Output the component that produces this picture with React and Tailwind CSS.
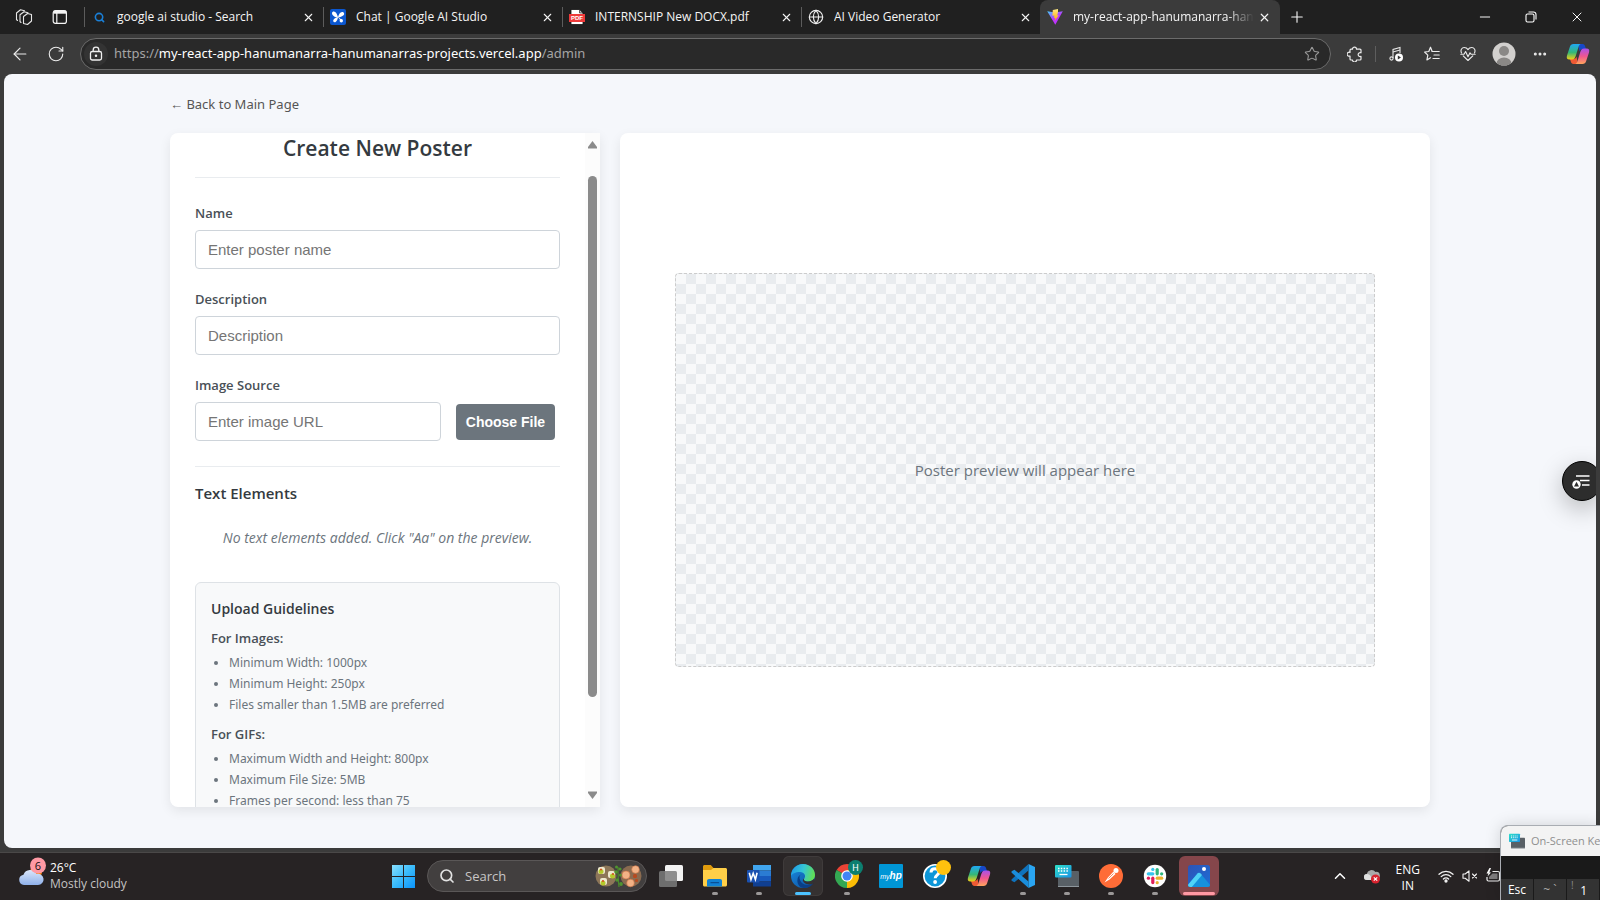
import React from "react";
import {
  ArrowLeft,
  RotateCw,
  Star,
  X,
  Plus,
  Minus,
  Search,
  ChevronUp,
  Globe,
  Ellipsis,
} from "lucide-react";

/* ---------- browser icons ---------- */

function WorkspacesIcon() {
  return (
    <svg className="h-[18px] w-[18px]" viewBox="0 0 18 18" fill="none" stroke="#e8e8e8" strokeWidth="1.1" strokeLinejoin="round" strokeLinecap="round">
      <path d="M8.500 8.500 12.500 5.500 16.500 6.500v6.500l-4 3.500L8.500 15.500z" />
      <path d="M6 14.500 5 13.500V6.800L9 3.800l4 1" />
      <path d="M2.500 12.500 1.500 11.500v-6.500L5.500 1.800 9.500 2.800" />
    </svg>
  );
}

function TabActionsIcon() {
  return (
    <svg className="h-4 w-4" viewBox="0 0 16 16" fill="none" stroke="#f5f5f5" strokeWidth="1.2">
      <rect x="1.200" y="1.700" width="13.200" height="12.700" rx="2.200" />
      <path d="M1.500 3.200h12.600" strokeWidth="3" />
      <path d="M4.800 4v10" />
    </svg>
  );
}

function StudioIcon() {
  return (
    <svg className="h-4 w-4" viewBox="0 0 16 16">
      <rect width="16" height="16" rx="2" fill="#0b57d0" />
      <g fill="#fff">
        <path d="M8 8.500C6 8.500 2 7 2 4.200 2 2.500 4 2 5.200 3 6.800 4.200 7.500 6.500 8 8.500z" />
        <path d="M8 8.500C8.500 6 10 3 12.200 3c1.800 0 2.600 2 1.300 3.300C12.200 7.600 10 8.300 8 8.500z" />
        <path d="M8 8c-2 .6-4.500 1.500-4.800 3.500-.2 1.700 1.600 2.200 2.700 1.200C7.200 11.500 7.800 9.800 8 8z" />
        <circle cx="11.300" cy="11.700" r="1.700" />
        <path d="M7.500 7.500l4.500 3.500-1 1z" />
      </g>
    </svg>
  );
}

function PdfIcon() {
  return (
    <svg className="h-4 w-4" viewBox="0 0 16 16">
      <path d="M2 .5h8.500L14 4v11.500H2z" fill="#fff" stroke="#111" strokeWidth=".8" />
      <path d="M10.500.5V4H14z" fill="#bbb" stroke="#111" strokeWidth=".6" />
      <rect x="0" y="5" width="16" height="8" fill="#ee3a3a" />
      <text x="8" y="11.200" textAnchor="middle" fontSize="6" fontWeight="700" fill="#fff" fontFamily="Liberation Sans, sans-serif">PDF</text>
    </svg>
  );
}

function ViteIcon() {
  return (
    <svg className="h-4 w-4" viewBox="0 0 16 16">
      <defs>
        <linearGradient id="viteBody" x1="0" y1="0" x2=".7" y2="1">
          <stop offset="0" stopColor="#41d1ff" />
          <stop offset=".6" stopColor="#bd34fe" />
        </linearGradient>
        <linearGradient id="viteBolt" x1="0" y1="0" x2="0" y2="1">
          <stop offset="0" stopColor="#ffea83" />
          <stop offset="1" stopColor="#ffa800" />
        </linearGradient>
      </defs>
      <path d="M.2 2.200 8 3.500l7.800-1.300L8.300 15.800z" fill="url(#viteBody)" />
      <path d="M11 0 5.800 1 5.400 6.800l2-.4-.5 2.700 1.500-.4L7.500 12l4.300-5.800-1.700.3.900-3.200z" fill="url(#viteBolt)" />
    </svg>
  );
}

function LockIcon() {
  return (
    <svg className="h-4 w-4" viewBox="0 0 16 16" fill="none" stroke="#f0f0f0" strokeWidth="1.300">
      <rect x="2.500" y="5.500" width="11" height="8.500" rx="1.800" />
      <path d="M5.200 5.500V4a2.800 2.800 0 0 1 5.600 0v1.500" />
      <circle cx="8" cy="9.800" r=".6" fill="#f0f0f0" />
    </svg>
  );
}

function ExtensionsIcon() {
  return (
    <svg className="h-4 w-4" viewBox="0 0 16 16" fill="none" stroke="#ececec" strokeWidth="1.200" strokeLinejoin="round">
      <path d="M5.500 3.200a2 2 0 0 1 4 0H13a1 1 0 0 1 1 1v2.600a2 2 0 1 0 0 3.600V13a1 1 0 0 1-1 1H9.500a2 2 0 0 1-4 0H4a1 1 0 0 1-1-1V10a2 2 0 1 1 0-3.600V4.200a1 1 0 0 1 1-1z" />
    </svg>
  );
}

function MusicIcon() {
  return (
    <svg className="h-4 w-4" viewBox="0 0 16 16" fill="none" stroke="#e8e8e8" strokeWidth="1.100">
      <path d="M5 12V3.500l7-2V7" />
      <path d="M5 6l7-2" />
      <circle cx="3.500" cy="12.500" r="1.600" />
      <circle cx="11" cy="11.500" r="4" fill="#fff" stroke="none" />
      <path d="M9.800 9.500v4l3.200-2z" fill="#333" stroke="none" />
    </svg>
  );
}

function FavoritesIcon() {
  return (
    <svg className="h-4 w-4" viewBox="0 0 16 16" fill="none" stroke="#ececec" strokeWidth="1.200" strokeLinejoin="round" strokeLinecap="round">
      <path d="M9.500 5.500H8.200L6.500 1.200 4.800 5.500.6 6l3.200 3.200-.9 4.800 3.600-2.200" />
      <path d="M8.200 5.500h7M10 9h5.200M9 12.500h6.200" />
    </svg>
  );
}

function EssentialsIcon() {
  return (
    <svg className="h-4 w-4" viewBox="0 0 16 16" fill="none" stroke="#ececec" strokeWidth="1.100" strokeLinejoin="round" strokeLinecap="round">
      <path d="M1.500 7C0 3.500 2.200 1.500 4.200 1.500 6 1.500 7.300 2.500 8 3.600 8.700 2.500 10 1.500 11.800 1.500c2 0 4.200 2 2.700 5.500" />
      <path d="M3.200 9.800 8 14.500l4.800-4.700" />
      <path d="M.8 8.300H4L5.600 5.500 8 10.800l2-4 1.200 1.500h4" />
    </svg>
  );
}

function AvatarIcon() {
  return (
    <svg className="h-6 w-6" viewBox="0 0 24 24">
      <defs>
        <clipPath id="avatarClip"><circle cx="12" cy="12" r="11.500" /></clipPath>
      </defs>
      <circle cx="12" cy="12" r="11.500" fill="#d2d0ce" />
      <g clipPath="url(#avatarClip)" fill="#8a8886">
        <circle cx="12" cy="9" r="5" />
        <ellipse cx="12" cy="21.500" rx="7.500" ry="6" />
      </g>
    </svg>
  );
}

function CopilotIcon({ id }) {
  return (
    <svg className="h-6 w-6" viewBox="0 0 24 24">
      <defs>
        <linearGradient id={id + "a"} x1="0" y1="0" x2="0" y2="1">
          <stop offset="0" stopColor="#1fa8f5" />
          <stop offset=".55" stopColor="#35b877" />
          <stop offset="1" stopColor="#f4d016" />
        </linearGradient>
        <linearGradient id={id + "b"} x1="0" y1="0" x2="0" y2="1">
          <stop offset="0" stopColor="#a951ea" />
          <stop offset=".5" stopColor="#f0568f" />
          <stop offset="1" stopColor="#ffa45c" />
        </linearGradient>
      </defs>
      <path d="M12 2h4.500c1.600 0 2.300 1 2.700 2.500L20 7h-3.500c-1.800 0-2.500 1-3 2.500z" fill="#1748c8" />
      <path d="M12 22H7.500c-1.600 0-2.300-1-2.700-2.500L4 17h3.500c1.800 0 2.500-1 3-2.500z" fill="#ee5a34" />
      <path d="M7.500 2h7.200c-1.300.6-1.800 1.700-2.200 3L9.700 14C8.800 16.500 8 17.500 6 17.500H3.500C1 17.500.3 16 1 13.500l3-9C4.500 3 5.500 2 7.500 2z" fill={"url(#" + id + "a)"} />
      <path d="M16.500 22H9.300c1.300-.6 1.800-1.700 2.200-3l2.800-9C15.200 7.500 16 6.500 18 6.500h2.500C23 6.500 23.700 8 23 10.500l-3 9c-.5 1.500-1.500 2.500-3.500 2.500z" fill={"url(#" + id + "b)"} />
    </svg>
  );
}

function RestoreIcon() {
  return (
    <svg className="h-3 w-3" viewBox="0 0 12 12" fill="none" stroke="#fff" strokeWidth="1.100">
      <rect x="1" y="3" width="8" height="8" rx="1.500" />
      <path d="M3.500 1h5A2.500 2.500 0 0 1 11 3.500v5" />
    </svg>
  );
}

function ReadingIcon() {
  return (
    <svg className="h-5 w-5" viewBox="0 0 20 20">
      <path d="M4 5h13.500M8 9.500h9.500M10 14h7.500" stroke="#fff" strokeWidth="1.600" />
      <circle cx="4.500" cy="13.500" r="4.200" fill="#fff" />
      <path d="M4.500 10.700 7 15.500H2z" fill="#2d2d2d" />
    </svg>
  );
}

/* ---------- taskbar icons ---------- */

function WeatherIcon() {
  return (
    <svg className="h-8 w-8" viewBox="0 0 32 32">
      <defs>
        <linearGradient id="cloud" x1="0" y1="0" x2="0" y2="1">
          <stop offset="0" stopColor="#dbe7fb" />
          <stop offset="1" stopColor="#8fb1ea" />
        </linearGradient>
      </defs>
      <circle cx="18" cy="15" r="6" fill="#f7820c" />
      <path d="M6 28a5.200 5.200 0 0 1-.5-10.300A7 7 0 0 1 18.500 17 5.600 5.600 0 1 1 20 28z" fill="url(#cloud)" />
      <circle cx="20" cy="8.500" r="8" fill="#ff99a4" />
      <text x="20" y="12.500" textAnchor="middle" fontSize="11" fill="#111" fontFamily="Open Sans, sans-serif">6</text>
    </svg>
  );
}

function WindowsIcon() {
  return (
    <svg className="h-6 w-6" viewBox="0 0 24 24">
      <defs>
        <linearGradient id="winLogo" x1="0" y1="0" x2="24" y2="24" gradientUnits="userSpaceOnUse">
          <stop offset="0" stopColor="#8fe3ff" />
          <stop offset=".5" stopColor="#3cbcfb" />
          <stop offset="1" stopColor="#0a93fb" />
        </linearGradient>
      </defs>
      <path d="M1 1h11v11H1zM13 1h11v11H13zM1 13h11v11H1zM13 13h11v11H13z" fill="url(#winLogo)" />
    </svg>
  );
}

function FoodIcon() {
  return (
    <svg className="h-6 w-12" viewBox="0 0 48 24">
      <circle cx="12" cy="12" r="10.500" fill="#8d7658" />
      <circle cx="37" cy="12" r="10.500" fill="#8a6b50" />
      <g fill="#efe9cf">
        <rect x="4" y="3" width="7" height="7" rx="2" />
        <rect x="14" y="7" width="7" height="7" rx="2" />
        <rect x="6" y="14" width="7" height="7" rx="2" />
      </g>
      <g fill="#b5c92c">
        <circle cx="7" cy="7.500" r="2.500" />
        <circle cx="18.500" cy="12" r="2.500" />
        <circle cx="9" cy="19" r="2.500" />
      </g>
      <g fill="#d83b1c">
        <circle cx="7" cy="5.500" r=".9" /><circle cx="19" cy="10" r=".9" /><circle cx="9" cy="17" r=".9" />
      </g>
      <path d="M25 23c-1-7-1-14-1-20" stroke="#4b8b2c" strokeWidth="1.200" fill="none" />
      <g fill="#4f9430">
        <circle cx="22.500" cy="3" r="1.500" /><circle cx="26" cy="5" r="1.600" /><circle cx="22" cy="8" r="1.700" />
        <circle cx="26.500" cy="11" r="1.500" /><circle cx="23" cy="16" r="1.700" /><circle cx="27" cy="20" r="1.900" />
      </g>
      <g fill="#f2b286" stroke="#cf7448" strokeWidth=".6">
        <circle cx="32" cy="11" r="4" /><circle cx="41.500" cy="5.500" r="3.800" /><circle cx="36.500" cy="19" r="3.800" />
      </g>
      <g fill="#b64a20">
        <rect x="39" y="10" width="4" height="4" rx="1.500" /><rect x="41" y="15" width="3" height="3" rx="1" />
      </g>
    </svg>
  );
}

function TaskViewIcon() {
  return (
    <svg className="h-6 w-6" viewBox="0 0 24 24">
      <rect x="6" y="1" width="18" height="16" rx="1.500" fill="#f3f3f3" />
      <rect x="0" y="7" width="18" height="16" rx="1.500" fill="#7b7b7b" fillOpacity=".85" />
    </svg>
  );
}

function ExplorerIcon() {
  return (
    <svg className="h-6 w-6" viewBox="0 0 24 24">
      <path d="M0 2.500C0 1.700.7 1 1.500 1h6.300l2.700 3H22v6H0z" fill="#e09b0d" />
      <path d="M0 6h8l2.500-2H22.500c.8 0 1.500.7 1.500 1.500V21c0 .8-.7 1.500-1.500 1.500h-21C.7 22.500 0 21.800 0 21z" fill="#ffcf48" />
      <path d="M4 22.500V17c0-1.200.8-2 2-2h11c1.200 0 2 .8 2 2v5.500z" fill="#1182d4" />
      <path d="M8 18.700h7.500" stroke="#0a4f94" strokeWidth="1.300" strokeLinecap="round" />
    </svg>
  );
}

function WordIcon() {
  return (
    <svg className="h-6 w-6" viewBox="0 0 24 24">
      <rect x="6" y="1" width="18" height="5.500" fill="#41a5ee" />
      <rect x="6" y="6.500" width="18" height="5.500" fill="#2b7cd3" />
      <rect x="6" y="12" width="18" height="5.500" fill="#185abd" />
      <rect x="6" y="17.500" width="18" height="5" fill="#103f91" />
      <rect x="0" y="6" width="12.500" height="12.500" rx="1" fill="#1a50b0" />
      <path d="M2.300 8.800 4 15.500 6.200 9.300 8.400 15.500 10.100 8.800" fill="none" stroke="#fff" strokeWidth="1.600" />
    </svg>
  );
}

function EdgeIcon() {
  return (
    <svg className="h-6 w-6" viewBox="0 0 24 24">
      <defs>
        <linearGradient id="edgeTop" x1="0" y1=".3" x2="1" y2=".5">
          <stop offset="0" stopColor="#1f9be8" />
          <stop offset=".5" stopColor="#35c5d4" />
          <stop offset="1" stopColor="#63e04f" />
        </linearGradient>
        <linearGradient id="edgeSide" x1="0" y1="0" x2="1" y2="1">
          <stop offset="0" stopColor="#1a8ae0" />
          <stop offset="1" stopColor="#0c4f9c" />
        </linearGradient>
      </defs>
      <circle cx="12" cy="12" r="12" fill="url(#edgeSide)" />
      <path d="M0 12C0 5 5.500 0 12 0c7 0 12 5 12 11 0 4-3 6.500-7 6.500-3 0-5-1-4-2.500 2.500-3 .5-7-4-7C4 8 1 10 0 12z" fill="url(#edgeTop)" />
      <path d="M8.500 13c0 5 4 8 8 8 2.500 0 4.500-1 5.800-2-1 2-4 5-9 5C8 24 5.800 19 6.500 15.500 7 12 9 11 11 10c-1.500.8-2.500 1.500-2.500 3z" fill="#0a3f87" />
      <path d="M13.200 14.500c-1 1.800 1 3 3.800 3 2.500 0 4.500-1 5.800-2.500L24 16l-2 3.500c-2 1.200-6 1.500-9-1-1.500-1.500-1.500-3.500.2-4z" fill="#353131" />
    </svg>
  );
}

function ChromeIcon() {
  return (
    <svg className="h-7 w-7" viewBox="0 0 28 28">
      <path d="M12 16 1.600 10A12 12 0 0 1 22.400 10z" fill="#ea4335" />
      <path d="M12 16 1.600 10A12 12 0 0 0 12 28l6-8.600z" fill="#34a853" />
      <path d="M12 16 12 28A12 12 0 0 0 22.400 10H12z" fill="#fbbc05" />
      <circle cx="12" cy="16" r="5.800" fill="#fff" />
      <circle cx="12" cy="16" r="4.500" fill="#4285f4" />
      <circle cx="20.500" cy="7.500" r="7.500" fill="#0c7f70" />
      <text x="20.500" y="11" textAnchor="middle" fontSize="9" fill="#fff" fontFamily="Roboto, sans-serif">H</text>
    </svg>
  );
}

function MyHpIcon() {
  return (
    <svg className="h-6 w-6" viewBox="0 0 24 24">
      <rect width="24" height="24" rx="1" fill="#0096d6" />
      <text x="12" y="15" textAnchor="middle" fontSize="7" fontStyle="italic" fill="#fff" fontFamily="Liberation Sans, sans-serif">
        my<tspan fontSize="10" fontWeight="700">hp</tspan>
      </text>
    </svg>
  );
}

function HelpIcon() {
  return (
    <svg className="h-7 w-7" viewBox="0 0 28 28">
      <circle cx="12" cy="16" r="11.200" fill="#0d96d8" stroke="#fff" strokeWidth="1.600" />
      <path d="M8 12.500C8 10 9.800 8.700 12 8.700s4 1.300 4 3.500c0 2.500-3.800 2.800-3.800 6" fill="none" stroke="#fff" strokeWidth="3" />
      <circle cx="12.100" cy="22" r="1.900" fill="#fff" />
      <circle cx="20.500" cy="7.500" r="7.500" fill="#ffc20e" />
    </svg>
  );
}

function CodeIcon() {
  return (
    <svg className="h-6 w-6" viewBox="0 0 24 24">
      <path d="M17.500 0 24 3v18l-6.500 3z" fill="#2aa5f2" />
      <path d="M17.500 0v6.500L3.500 18.200 1 17c-.8-.6-.8-1.400 0-2z" fill="#0f73bd" />
      <path d="M17.500 24v-6.500L3.500 5.800 1 7c-.8.600-.8 1.400 0 2z" fill="#1a8ddb" />
    </svg>
  );
}

function KeyboardAppIcon({ id, className }) {
  return (
    <svg className={className} viewBox="0 0 24 24">
      <defs>
        <linearGradient id={id} x1="0" y1="0" x2="1" y2="1">
          <stop offset="0" stopColor="#2de0c8" />
          <stop offset="1" stopColor="#1a92e6" />
        </linearGradient>
      </defs>
      <rect x="3" y="7" width="21" height="16" rx="1" fill="#596066" />
      <path d="M3 22.500h21" stroke="#8e969c" />
      <rect x="0" y="1" width="16.500" height="12.500" rx="1" fill={"url(#" + id + ")"} />
      <path d="M3 4.500h11M3 7h11" stroke="#fff" strokeWidth="1.300" strokeDasharray="1.500 1.300" />
      <path d="M4.500 10.500h8" stroke="#fff" strokeWidth="1.300" />
    </svg>
  );
}

function PostmanIcon() {
  return (
    <svg className="h-6 w-6" viewBox="0 0 24 24">
      <circle cx="12" cy="12" r="12" fill="#ff6c37" />
      <circle cx="17" cy="6.500" r="2.500" fill="#fff" />
      <path d="M14.500 7.500 16.500 10 10.500 15.500 5.500 18.500 9 13.500z" fill="#fff" />
      <path d="M14.500 9.500 9.500 14.500" stroke="#ff6c37" strokeWidth=".8" />
    </svg>
  );
}

function SlackIcon() {
  return (
    <svg className="h-6 w-6" viewBox="0 0 24 24">
      <circle cx="12" cy="12" r="11.200" fill="#fff" />
      <g strokeWidth="3.200" strokeLinecap="round">
        <path d="M9.800 5.400v.1" stroke="#36c5f0" /><path d="M5.300 9.800h4.500" stroke="#36c5f0" />
        <path d="M14.200 5.500v4.300" stroke="#2eb67d" /><path d="M18.600 9.800h.1" stroke="#2eb67d" />
        <path d="M14.200 14.200h4.500" stroke="#ecb22e" /><path d="M14.200 18.600v.1" stroke="#ecb22e" />
        <path d="M9.800 14.200v4.400" stroke="#e01e5a" /><path d="M5.400 14.200h.1" stroke="#e01e5a" />
      </g>
    </svg>
  );
}

function PhotosIcon() {
  return (
    <svg className="h-6 w-6" viewBox="0 0 24 24">
      <defs>
        <linearGradient id="photoBg" x1="0" y1="0" x2="1" y2="1">
          <stop offset="0" stopColor="#2f52b4" />
          <stop offset="1" stopColor="#1c6fd8" />
        </linearGradient>
        <clipPath id="photoClip"><rect x="1" y="1" width="22" height="22" rx="2.500" /></clipPath>
      </defs>
      <g clipPath="url(#photoClip)">
        <rect width="24" height="24" fill="url(#photoBg)" />
        <path d="M0 22 10.500 9.500c1-1 2-1 3 0L24 22v3H0z" fill="#1690dc" />
        <path d="M0 22 10.500 9.500c1-1 2-1 3 0L15 11 4 24H0z" fill="#4fd3f7" />
      </g>
      <circle cx="17" cy="5" r="2" fill="#fff" />
    </svg>
  );
}

function CloudErrorIcon() {
  return (
    <svg className="h-4 w-4" viewBox="0 0 16 16">
      <path d="M3 12a3 3 0 0 1-.3-6A5 5 0 0 1 11.500 4 3.500 3.500 0 0 1 13 11z" fill="#a9a9a9" />
      <path d="M3 12a3 3 0 0 1 0-6c2 0 3 1 4 2.500V12z" fill="#e0e0e0" />
      <circle cx="11.500" cy="11" r="4.500" fill="#d8232f" />
      <path d="m9.800 9.300 3.400 3.400m0-3.400-3.400 3.400" stroke="#fff" strokeWidth="1.200" />
    </svg>
  );
}

function WifiIcon() {
  return (
    <svg className="h-4 w-4" viewBox="0 0 16 16" fill="none" stroke="#f2f2f2" strokeWidth="1.300" strokeLinecap="round">
      <path d="M1 6.200a10 10 0 0 1 14 0M3.200 8.600a6.800 6.800 0 0 1 9.600 0M5.400 11a3.700 3.700 0 0 1 5.200 0" />
      <circle cx="8" cy="13" r="1" fill="#f2f2f2" />
    </svg>
  );
}

function MutedIcon() {
  return (
    <svg className="h-4 w-4" viewBox="0 0 16 16" fill="none" stroke="#f2f2f2" strokeWidth="1.100" strokeLinecap="round" strokeLinejoin="round">
      <path d="M1 6h2.200L7 2.800v10.400L3.200 10.200H1z" />
      <path d="m10.500 6 4 4m0-4-4 4" />
    </svg>
  );
}

function BatteryIcon() {
  return (
    <svg className="h-4 w-4" viewBox="0 0 16 16" fill="none" stroke="#f2f2f2" strokeWidth="1.200">
      <path d="M6.500 3.500H12A1.500 1.500 0 0 1 13.500 5v6.500A1.500 1.500 0 0 1 12 13H2.500A1.500 1.500 0 0 1 1 11.500V9" />
      <path d="M6.500 5.500h5V11H3V9z" fill="#d8d8d8" fillOpacity=".5" stroke="none" />
      <path d="M3.500 0 .5 5.500h2l-1 3L5 4.500H3.300L5 0z" fill="#fff" stroke="none" />
    </svg>
  );
}

/* ---------- browser chrome ---------- */

const tabs = [
  { title: "google ai studio - Search", icon: <Search className="h-[11px] w-[11px] text-[#1a7fd6]" strokeWidth={3.500} /> },
  { title: "Chat | Google AI Studio", icon: <StudioIcon /> },
  { title: "INTERNSHIP New DOCX.pdf", icon: <PdfIcon /> },
  { title: "AI Video Generator", icon: <Globe className="h-4 w-4 text-[#f0f0f0]" strokeWidth={1.700} /> },
];

function TabBar() {
  return (
    <header className="flex h-[34px] shrink-0 items-stretch bg-[#202020] text-xs text-[#f5f5f5]">
      <div className="flex items-center gap-[19px] pr-4 pl-[15px]">
        <button type="button" aria-label="Workspaces"><WorkspacesIcon /></button>
        <button type="button" aria-label="Tab actions"><TabActionsIcon /></button>
      </div>
      {tabs.map((tab) => (
        <div key={tab.title} className="flex w-[239px] items-center">
          <span className="h-5 w-px bg-[#5c5c5c]" />
          <span className="ml-1.5 flex w-4 shrink-0 items-center justify-center">{tab.icon}</span>
          <span className="ml-2.5 flex-1 truncate">{tab.title}</span>
          <button type="button" aria-label="Close tab" className="mr-2"><X className="h-[13px] w-[13px]" strokeWidth={2} /></button>
        </div>
      ))}
      <div className="flex w-[240px] items-center rounded-t-lg bg-[#3b3b3b]">
        <span className="ml-[7px] shrink-0"><ViteIcon /></span>
        <span className="ml-2.5 flex-1 overflow-hidden whitespace-nowrap [mask-image:linear-gradient(to_right,#000_85%,transparent)]">
          my-react-app-hanumanarra-hanu
        </span>
        <button type="button" aria-label="Close tab" className="mr-[9px] ml-1"><X className="h-[13px] w-[13px]" strokeWidth={2.200} /></button>
      </div>
      <button type="button" aria-label="New tab" className="ml-2"><Plus className="h-[18px] w-[18px]" strokeWidth={1.500} /></button>
      <div className="ml-auto flex items-center">
        <button type="button" aria-label="Minimize" className="flex w-[46px] justify-center"><Minus className="h-4 w-4" strokeWidth={1.500} /></button>
        <button type="button" aria-label="Restore" className="flex w-[46px] justify-center"><RestoreIcon /></button>
        <button type="button" aria-label="Close" className="flex w-[46px] justify-center"><X className="h-4 w-4" strokeWidth={1.500} /></button>
      </div>
    </header>
  );
}

function Toolbar() {
  return (
    <nav className="flex h-10 shrink-0 items-center bg-[#3b3b3b] pr-2.5 pl-2.5 text-[#ececec]">
      <button type="button" aria-label="Back"><ArrowLeft className="h-5 w-5" strokeWidth={1.400} /></button>
      <button type="button" aria-label="Refresh" className="ml-[17px]"><RotateCw className="h-[18px] w-[18px]" strokeWidth={1.500} /></button>
      <div className="ml-[15px] flex h-8 flex-1 items-center rounded-full border border-[#6b6b6b] bg-[#292929] pr-2.5 pl-[3px]">
        <span className="flex h-6 w-6 items-center justify-center rounded-full bg-[#333]"><LockIcon /></span>
        <a href="#admin" className="ml-1.5 flex-1 font-['Noto_Sans',sans-serif] text-[13px] text-[#a5a5a5]">
          https://<span className="text-white">my-react-app-hanumanarra-hanumanarras-projects.vercel.app</span>/admin
        </a>
        <button type="button" aria-label="Add to favorites"><Star className="h-4 w-4 text-[#9a9a9a]" strokeWidth={1.600} /></button>
      </div>
      <button type="button" aria-label="Extensions" className="ml-4"><ExtensionsIcon /></button>
      <span className="ml-3 h-4 w-px bg-[#5e5e5e]" />
      <button type="button" aria-label="Media" className="ml-3"><MusicIcon /></button>
      <button type="button" aria-label="Favorites" className="ml-5"><FavoritesIcon /></button>
      <button type="button" aria-label="Browser essentials" className="ml-5"><EssentialsIcon /></button>
      <button type="button" aria-label="Profile" className="ml-4"><AvatarIcon /></button>
      <button type="button" aria-label="More" className="ml-4"><Ellipsis className="h-4 w-4" strokeWidth={2.500} /></button>
      <button type="button" aria-label="Copilot" className="ml-[18px]"><CopilotIcon id="cpBar" /></button>
    </nav>
  );
}

/* ---------- page ---------- */

const inputClass =
  "h-[39px] w-full rounded border border-[#ced4da] bg-white px-3 font-['Liberation_Sans',sans-serif] text-[15px] text-[#333] placeholder:text-[#757575]";
const labelClass = "mb-[7px] block text-[13px] leading-[19px] font-semibold text-[#495057]";

function Field({ id, label, placeholder }) {
  return (
    <div className="mb-[21px]">
      <label htmlFor={id} className={labelClass}>{label}</label>
      <input id={id} type="text" placeholder={placeholder} className={inputClass} />
    </div>
  );
}

function GuideList({ title, items }) {
  return (
    <>
      <h4 className="text-[13px] leading-5 font-semibold text-[#495057]">{title}</h4>
      <ul className="mt-1 mb-[9px] list-disc pl-[18px] font-['Noto_Sans',sans-serif] text-xs leading-[21px] text-[#6c757d]">
        {items.map((item) => <li key={item}>{item}</li>)}
      </ul>
    </>
  );
}

function PosterForm() {
  return (
    <section className="flex w-[430px] shrink-0 overflow-hidden rounded-lg rounded-r-none bg-white shadow-[0_4px_12px_rgba(0,0,0,0.08)]">
      <form className="min-w-0 flex-1 overflow-hidden px-[25px]">
        <h2 className="mb-[26px] border-b border-[#e9ecef] pb-[14px] text-center text-[21px] leading-[30px] font-semibold text-[#343a40]">
          Create New Poster
        </h2>
        <Field id="name" label="Name" placeholder="Enter poster name" />
        <Field id="description" label="Description" placeholder="Description" />
        <label htmlFor="image" className={labelClass}>Image Source</label>
        <div className="flex items-center gap-[15px] pr-[5px]">
          <input id="image" type="text" placeholder="Enter image URL" className={inputClass} />
          <button type="button" className="h-9 w-[99px] shrink-0 rounded bg-[#6c757d] font-['Liberation_Sans',sans-serif] text-sm font-bold whitespace-nowrap text-white">
            Choose File
          </button>
        </div>
        <h3 className="mt-[25px] border-t border-[#e9ecef] pt-[15px] text-[15px] leading-[22px] font-semibold text-[#343a40]">Text Elements</h3>
        <p className="pt-[23px] pb-[33px] text-center text-[14px] leading-[22px] text-[#6c757d] italic">
          No text elements added. Click "Aa" on the preview.
        </p>
        <div className="rounded-md border border-[#dee2e6] bg-[#f8f9fa] p-[15px]">
          <h3 className="mb-2 text-[14px] leading-[22px] font-semibold text-[#343a40]">Upload Guidelines</h3>
          <GuideList title="For Images:" items={["Minimum Width: 1000px", "Minimum Height: 250px", "Files smaller than 1.5MB are preferred"]} />
          <GuideList title="For GIFs:" items={["Maximum Width and Height: 800px", "Maximum File Size: 5MB", "Frames per second: less than 75"]} />
        </div>
      </form>
      <div aria-hidden="true" className="flex w-[15px] shrink-0 flex-col items-center bg-[#fcfcfc] pt-2 pb-2">
        <svg className="h-2 w-[9px]" viewBox="0 0 9 8"><path d="M4.500 0 9 6v1.500H0V6z" fill="#8b8b8b" /></svg>
        <div className="mt-[27px] h-[521px] w-[9px] rounded-full bg-[#8b8b8b]" />
        <svg className="mt-auto h-2 w-[9px]" viewBox="0 0 9 8"><path d="M4.500 8 9 2V.5H0V2z" fill="#8b8b8b" /></svg>
      </div>
    </section>
  );
}

function Preview() {
  return (
    <section className="flex flex-1 items-center justify-center rounded-lg bg-white px-[55px] shadow-[0_4px_12px_rgba(0,0,0,0.08)]">
      <div className="flex aspect-video w-full items-center justify-center rounded border border-dashed border-[#ccc] bg-[conic-gradient(#e9ecef_25%,#f8f9fa_0_50%,#e9ecef_0_75%,#f8f9fa_0)] bg-size-[20px_20px]">
        <p className="text-[15px] text-[#6c757d]">Poster preview will appear here</p>
      </div>
    </section>
  );
}

/* ---------- taskbar ---------- */

const apps = [
  { name: "Task view", icon: <TaskViewIcon /> },
  { name: "File Explorer", icon: <ExplorerIcon />, open: true },
  { name: "Word", icon: <WordIcon />, open: true },
  { name: "Edge", icon: <EdgeIcon />, active: true },
  { name: "Chrome", icon: <span className="-mt-1 -mr-1"><ChromeIcon /></span>, open: true },
  { name: "myHP", icon: <MyHpIcon /> },
  { name: "HP Support", icon: <span className="-mt-1 -mr-1"><HelpIcon /></span> },
  { name: "Copilot", icon: <CopilotIcon id="cpTask" /> },
  { name: "Visual Studio Code", icon: <CodeIcon />, open: true },
  { name: "Keyboard", icon: <KeyboardAppIcon id="kbTask" className="h-6 w-6" />, open: true },
  { name: "Postman", icon: <PostmanIcon />, open: true },
  { name: "Slack", icon: <SlackIcon />, open: true },
  { name: "Photos", icon: <PhotosIcon />, alert: true },
];

function TaskButton({ app }) {
  const tone = app.active ? "bg-[#353131] ring-1 ring-[#3f3b3b] ring-inset" : app.alert ? "bg-[#85464b]" : "";
  return (
    <button type="button" aria-label={app.name} className={"relative flex h-10 w-10 items-center justify-center rounded-md " + tone}>
      {app.icon}
      {app.open && <span className="absolute bottom-px h-[3px] w-1.5 rounded-full bg-[#9b9898]" />}
      {app.active && <span className="absolute bottom-px h-[3px] w-4 rounded-full bg-[#4cc2ff]" />}
      {app.alert && <span className="absolute bottom-px h-[3px] w-8 rounded-full bg-[#ff99a4]" />}
    </button>
  );
}

function Taskbar() {
  return (
    <footer className="grid h-12 shrink-0 grid-cols-[1fr_auto_1fr] items-start border-t border-[#4a4848] bg-[#272324] pt-[3px] text-xs leading-4 text-white">
      <div className="flex items-start pt-px pl-[18px]">
        <WeatherIcon />
        <div className="pt-[3px]">
          <p>26°C</p>
          <p className="text-[#c4c2c2]">Mostly cloudy</p>
        </div>
      </div>
      <div className="flex items-center gap-1 pl-0.5">
        <button type="button" aria-label="Start" className="flex h-10 w-10 items-center justify-center"><WindowsIcon /></button>
        <label className="flex h-8 w-[220px] items-center rounded-full border border-[#5a5757] bg-[#423f3f] pr-1 pl-[11px]">
          <Search className="h-4 w-4 text-[#e2e2e2]" strokeWidth={2.500} />
          <input type="text" aria-label="Search" placeholder="Search" className="ml-2.5 min-w-0 flex-1 bg-transparent text-[13px] placeholder:text-[#c8c6c6]" />
          <FoodIcon />
        </label>
        {apps.map((app) => <TaskButton key={app.name} app={app} />)}
      </div>
      <div className="flex h-10 items-center justify-end pr-[98px]">
        <ChevronUp className="h-[18px] w-[18px]" strokeWidth={2} />
        <span className="ml-[15px]"><CloudErrorIcon /></span>
        <div className="mr-[18px] ml-4 pt-[3px] text-center"><p>ENG</p><p>IN</p></div>
        <div className="flex gap-2">
          <WifiIcon />
          <MutedIcon />
          <BatteryIcon />
        </div>
      </div>
    </footer>
  );
}

function KeyboardWindow() {
  return (
    <aside className="absolute right-0 bottom-0 w-[100px] overflow-hidden rounded-tl-lg border-t border-l border-[#a9adb3] bg-[#1a1a1a] shadow-[0_0_16px_rgba(0,0,0,0.15)]">
      <div className="flex h-[30px] items-center gap-1.5 overflow-hidden bg-[#f3f3f3] pl-2 text-[11px] whitespace-nowrap text-[#8f8f8f]">
        <KeyboardAppIcon id="kbWin" className="h-4 w-4 shrink-0" />
        On-Screen Keyboard
      </div>
      <div className="mt-[23px] flex h-[21px] gap-px text-xs text-white">
        <button type="button" className="w-8 bg-[#333]">Esc</button>
        <button type="button" className="w-8 bg-[#333] text-[#aaa]">~ `</button>
        <button type="button" className="flex w-8 justify-between bg-[#333] px-1"><span className="text-[10px] text-[#888]">!</span><span className="pt-1 pr-2">1</span></button>
      </div>
    </aside>
  );
}

export default function App() {
  return (
    <div className="relative flex h-screen flex-col overflow-hidden bg-[#3b3b3b] font-['Open_Sans','Noto_Sans',sans-serif]">
      <TabBar />
      <Toolbar />
      <main className="relative mx-1 mb-1 flex min-h-0 flex-1 flex-col overflow-hidden rounded-lg bg-[#f5f7fb]">
        <div className="mx-auto flex min-h-0 w-full max-w-[1260px] flex-1 flex-col pt-5 pb-[41px]">
          <a href="#main" className="self-start font-['Noto_Sans',sans-serif] text-[13px] leading-5 text-[#555]">← Back to Main Page</a>
          <div className="mt-[19px] flex min-h-0 flex-1 gap-5">
            <PosterForm />
            <Preview />
          </div>
        </div>
        <button type="button" aria-label="Reading tools" className="absolute top-[387px] -right-1.5 flex h-10 w-10 items-center justify-center rounded-full border border-black bg-[#2d2d2d] shadow-[0_8px_24px_rgba(0,0,0,0.25)]">
          <ReadingIcon />
        </button>
      </main>
      <Taskbar />
      <KeyboardWindow />
    </div>
  );
}
